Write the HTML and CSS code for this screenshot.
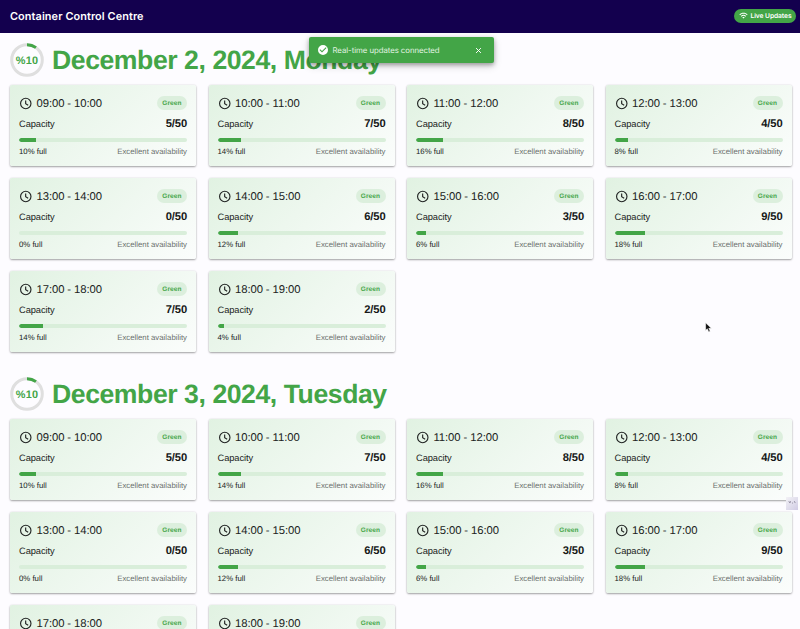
FILE: index.html
```html
<!DOCTYPE html>
<html lang="en">
<head>
<meta charset="utf-8">
<title>Container Control Centre</title>
<link rel="stylesheet" href="styles.css">
</head>
<body>
<header class="topbar">
  <h1 class="brand">Container Control Centre</h1>
  <span class="live">
    <svg class="live-icon" viewBox="0 0 24 24"><path fill="currentColor" d="M1 9l2 2c4.970-4.970 13.030-4.970 18 0l2-2C16.930 2.930 7.080 2.930 1 9zm8 8l3 3 3-3c-1.650-1.660-4.340-1.660-6 0zm-4-4l2 2c2.760-2.760 7.240-2.760 10 0l2-2C15.140 9.140 8.870 9.140 5 13z"/></svg>
    <span>Live Updates</span>
  </span>
</header>
<div class="toast">
  <svg class="toast-check" viewBox="0 0 24 24"><path fill="currentColor" d="M12 2a10 10 0 1 0 0 20 10 10 0 0 0 0-20zm-2 15-5-5 1.400-1.400 3.600 3.600 7.600-7.600L19 8z"/></svg>
  <span class="toast-text">Real-time updates connected</span>
  <svg class="toast-close" viewBox="0 0 24 24"><path fill="none" stroke="currentColor" stroke-width="2.600" d="M5.500 5.500l13 13M18.500 5.500l-13 13"/></svg>
</div>
<main id="days" class="days"></main>
<svg class="cursor" viewBox="0 0 12 18"><path d="M1 1v13l3-2.700 2.400 5.200 2.500-1.100-2.400-5H11z" fill="#111" stroke="#fff"/></svg>
<div class="widget"><svg viewBox="0 0 13 13"><path d="M3 4l1.500 2M5 4L4 6M9 4l1 2M6.500 6h1" stroke="#8f8a9e" fill="none"/></svg></div>
<script src="script.js"></script>
</body>
</html>
```
FILE: styles.css
```css
* { box-sizing: border-box; }
body {
  margin: 0;
  height: 629px;
  overflow: hidden;
  position: relative;
  background: #fdfcff;
  color: #202322;
  font-family: "Liberation Sans", Arial, sans-serif;
  text-rendering: geometricPrecision;
}
.topbar {
  height: 33px;
  padding: 0 4px 2px 10px;
  display: flex;
  align-items: center;
  justify-content: space-between;
  background: #13004e;
  color: #fff;
  font-family: Inter, sans-serif;
}
.brand { margin: 0; font-size: 10.900px; font-weight: 560; letter-spacing: .090px; white-space: nowrap; }
.live {
  display: flex;
  align-items: center;
  gap: 2.500px;
  width: 62px;
  height: 14px;
  padding-left: 5px;
  border-radius: 7px;
  background: #43a547;
  font-size: 6.700px;
  font-weight: 600;
  letter-spacing: -.080px;
  white-space: nowrap;
}
.live-icon { width: 9px; height: 9px; flex: none; }
.toast {
  position: absolute;
  z-index: 2;
  left: 309px;
  top: 37px;
  width: 185px;
  height: 26px;
  padding: 0 11px 0 8px;
  display: flex;
  align-items: center;
  border-radius: 2px;
  background: #43a547;
  color: #fff;
  font: 7.800px Inter, sans-serif;
  box-shadow: 0 2px 4px rgba(0, 0, 0, .3), 0 3px 8px rgba(0, 0, 0, .16);
}
.toast-check { width: 12px; height: 12px; }
.toast-text { margin-left: 3.500px; color: #e2f4e2; letter-spacing: -.050px; white-space: nowrap; }
.toast-close { width: 9px; height: 9px; margin-left: auto; }
.days { padding: 10px 8.500px 0 10px; }
.day { height: 334px; }
.day-head { height: 34px; display: flex; align-items: center; }
.ring { width: 34px; height: 34px; flex: none; }
.ring-text { font: bold 10.900px "Liberation Sans", Arial, sans-serif; letter-spacing: .200px; fill: #43a547; }
.day-title {
  margin: 0 0 0 8px;
  font-size: 26.600px;
  line-height: 34px;
  letter-spacing: -.430px;
  font-weight: 700;
  color: #43a547;
  white-space: nowrap;
}
.slots {
  margin-top: 8px;
  display: grid;
  grid-template-columns: repeat(4, 1fr);
  gap: 12px 12.500px;
}
.slot {
  height: 81px;
  padding: 10px 9px 0;
  border-radius: 2px;
  background: linear-gradient(135deg, #e1f2e2, #fbfdfc);
  box-shadow: 0 1px 2px rgba(0, 0, 0, .34), 0 0 2px rgba(0, 0, 0, .12);
}
.row { display: flex; align-items: center; justify-content: space-between; white-space: nowrap; }
.row-time { height: 16px; }
.time { display: flex; align-items: center; gap: 4.500px; font-size: 11.300px; letter-spacing: -.090px; line-height: 15px; }
.time span { padding-top: 2px; }
.clock { width: 13px; height: 13px; margin-top: 1px; }
.tag {
  width: 30px;
  height: 14px;
  padding-top: 1px;
  border-radius: 7px;
  background: #dcefdd;
  color: #43a547;
  font-size: 6.500px;
  line-height: 13px;
  font-weight: 700;
  letter-spacing: .120px;
  text-align: center;
}
.row-capacity { height: 26px; font-size: 9.300px; letter-spacing: -.080px; }
.count { font-size: 11.200px; letter-spacing: -.100px; color: #161817; }
.bar { height: 4px; margin-top: 1px; border-radius: 2px; background: #d9eeda; overflow: hidden; }
.fill { height: 100%; border-radius: 2px 0 0 2px; background: #43a547; }
.row-foot { height: 10px; margin-top: 4px; font-size: 7.800px; }
.status { color: #6b706d; }
.cursor { position: absolute; left: 705px; top: 322px; width: 7px; height: 11px; }
.widget {
  position: absolute;
  left: 786px;
  top: 497px;
  width: 12px;
  height: 13px;
  background: linear-gradient(135deg, #f3f2f6, #d0cbe4);
}
.widget svg { display: block; width: 12px; height: 13px; }
```
FILE: script.js
```js
const counts = [5, 7, 8, 4, 0, 6, 3, 9, 7, 2];
const dates = ["December 2, 2024, Monday", "December 3, 2024, Tuesday"];

const slot = (count, i) => `
  <article class="slot">
    <div class="row row-time">
      <span class="time">
        <svg class="clock" viewBox="0 0 24 24" fill="none" stroke="currentColor" stroke-width="2.100"><circle cx="12.500" cy="12" r="9.600"/><path d="M12.300 6.500v6l4.600 2.800"/></svg>
        <span>${String(9 + i).padStart(2, "0")}:00 - ${10 + i}:00</span>
      </span>
      <span class="tag">Green</span>
    </div>
    <div class="row row-capacity"><span>Capacity</span><b class="count">${count}/50</b></div>
    <div class="bar"><div class="fill" style="width:${count * 2}%"></div></div>
    <div class="row row-foot"><span>${count * 2}% full</span><span class="status">Excellent availability</span></div>
  </article>`;

document.getElementById("days").innerHTML = dates.map(date => `
  <section class="day">
    <div class="day-head">
      <svg class="ring" viewBox="0 0 34 34">
        <circle cx="17" cy="17" r="15.300" fill="none" stroke="#dfdfdf" stroke-width="3"/>
        <circle cx="17" cy="17" r="15.300" fill="none" stroke="#43a547" stroke-width="3" pathLength="100" stroke-dasharray="10 90" transform="rotate(-90 17 17)"/>
        <text class="ring-text" x="17" y="20.700" text-anchor="middle">%10</text>
      </svg>
      <h2 class="day-title">${date}</h2>
    </div>
    <div class="slots">${counts.map(slot).join("")}</div>
  </section>`).join("");
```
